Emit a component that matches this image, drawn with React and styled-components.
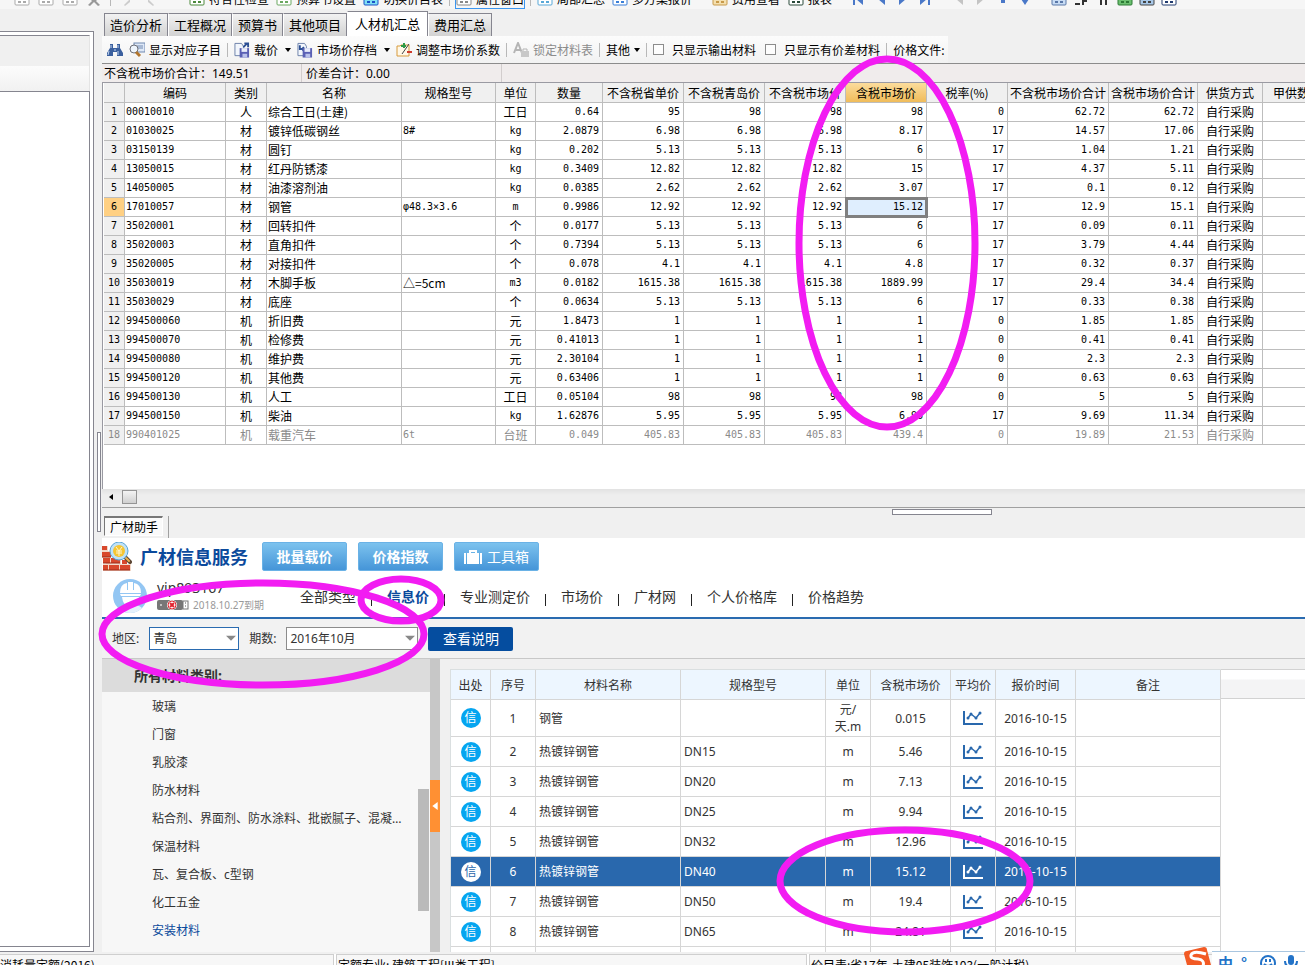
import React, { useState } from 'react';
import styled, { createGlobalStyle } from 'styled-components';

const CJK = '"Noto Sans CJK SC", sans-serif';
const WEB_FONT = '"Noto Sans", "Noto Sans CJK SC", sans-serif';
const MONO = '"DejaVu Sans Mono", "Noto Sans CJK SC", monospace';

const TABS = ['造价分析', '工程概况', '预算书', '其他项目', '人材机汇总', '费用汇总'];

const COLUMNS = [
  { title: '', width: 21, align: 'center' },
  { title: '编码', width: 101, align: 'left' },
  { title: '类别', width: 41, align: 'center' },
  { title: '名称', width: 135, align: 'left' },
  { title: '规格型号', width: 94, align: 'left' },
  { title: '单位', width: 40, align: 'center' },
  { title: '数量', width: 67, align: 'right' },
  { title: '不含税省单价', width: 81, align: 'right' },
  { title: '不含税青岛价', width: 81, align: 'right' },
  { title: '不含税市场价', width: 81, align: 'right' },
  { title: '含税市场价', width: 81, align: 'right' },
  { title: '税率(%)', width: 81, align: 'right' },
  { title: '不含税市场价合计', width: 101, align: 'right' },
  { title: '含税市场价合计', width: 89, align: 'right' },
  { title: '供货方式', width: 65, align: 'center' },
  { title: '甲供数量', width: 69, align: 'right' },
];

const ACTIVE_COLUMN = 10;
const ACTIVE_ROW = 6;

const ROWS = [
  ['00010010', '人', '综合工日(土建)', '', '工日', '0.64', '95', '98', '98', '98', '0', '62.72', '62.72'],
  ['01030025', '材', '镀锌低碳钢丝', '8#', 'kg', '2.0879', '6.98', '6.98', '6.98', '8.17', '17', '14.57', '17.06'],
  ['03150139', '材', '圆钉', '', 'kg', '0.202', '5.13', '5.13', '5.13', '6', '17', '1.04', '1.21'],
  ['13050015', '材', '红丹防锈漆', '', 'kg', '0.3409', '12.82', '12.82', '12.82', '15', '17', '4.37', '5.11'],
  ['14050005', '材', '油漆溶剂油', '', 'kg', '0.0385', '2.62', '2.62', '2.62', '3.07', '17', '0.1', '0.12'],
  ['17010057', '材', '钢管', 'φ48.3×3.6', 'm', '0.9986', '12.92', '12.92', '12.92', '15.12', '17', '12.9', '15.1'],
  ['35020001', '材', '回转扣件', '', '个', '0.0177', '5.13', '5.13', '5.13', '6', '17', '0.09', '0.11'],
  ['35020003', '材', '直角扣件', '', '个', '0.7394', '5.13', '5.13', '5.13', '6', '17', '3.79', '4.44'],
  ['35020005', '材', '对接扣件', '', '个', '0.078', '4.1', '4.1', '4.1', '4.8', '17', '0.32', '0.37'],
  ['35030019', '材', '木脚手板', '△=5cm', 'm3', '0.0182', '1615.38', '1615.38', '1615.38', '1889.99', '17', '29.4', '34.4'],
  ['35030029', '材', '底座', '', '个', '0.0634', '5.13', '5.13', '5.13', '6', '17', '0.33', '0.38'],
  ['994500060', '机', '折旧费', '', '元', '1.8473', '1', '1', '1', '1', '0', '1.85', '1.85'],
  ['994500070', '机', '检修费', '', '元', '0.41013', '1', '1', '1', '1', '0', '0.41', '0.41'],
  ['994500080', '机', '维护费', '', '元', '2.30104', '1', '1', '1', '1', '0', '2.3', '2.3'],
  ['994500120', '机', '其他费', '', '元', '0.63406', '1', '1', '1', '1', '0', '0.63', '0.63'],
  ['994500130', '机', '人工', '', '工日', '0.05104', '98', '98', '98', '98', '0', '5', '5'],
  ['994500150', '机', '柴油', '', 'kg', '1.62876', '5.95', '5.95', '5.95', '6.96', '17', '9.69', '11.34'],
  ['990401025', '机', '载重汽车', '6t', '台班', '0.049', '405.83', '405.83', '405.83', '439.4', '0', '19.89', '21.53'],
];

const NAV = ['全部类型', '信息价', '专业测定价', '市场价', '广材网', '个人价格库', '价格趋势'];

const CATEGORIES = [
  '玻璃',
  '门窗',
  '乳胶漆',
  '防水材料',
  '粘合剂、界面剂、防水涂料、批嵌腻子、混凝土外加剂',
  '保温材料',
  '瓦、复合板、c型钢',
  '化工五金',
  '安装材料',
];

const PRICE_COLUMNS = [
  ['出处', 40], ['序号', 45], ['材料名称', 145], ['规格型号', 145], ['单位', 45],
  ['含税市场价', 80], ['平均价', 45], ['报价时间', 80], ['备注', 145],
];

const PRICE_DATE = '2016-10-15';

const PRICES = [
  ['钢管', '', '元/天.m', '0.015', PRICE_DATE],
  ['热镀锌钢管', 'DN15', 'm', '5.46', PRICE_DATE],
  ['热镀锌钢管', 'DN20', 'm', '7.13', PRICE_DATE],
  ['热镀锌钢管', 'DN25', 'm', '9.94', PRICE_DATE],
  ['热镀锌钢管', 'DN32', 'm', '12.96', PRICE_DATE],
  ['热镀锌钢管', 'DN40', 'm', '15.12', PRICE_DATE],
  ['热镀锌钢管', 'DN50', 'm', '19.4', PRICE_DATE],
  ['热镀锌钢管', 'DN65', 'm', '24.81', PRICE_DATE],
  [],
];

const isMono = (text) => !/[\u4e00-\u9fff△]/.test(text);

/* ---------- icons ---------- */

const BinocularsIcon = () => (
  <svg width="16" height="16" viewBox="0 0 16 16">
    <path d="M3 2h3v4h4V2h3v4l3 5v3h-6v-4H6v4H0v-3l3-5z" fill="#3a5f9e" />
    <path d="M2 9l-1 4M11 9v4M4 3v3M11 3v3M7 8h2" stroke="#c4d6f0" strokeWidth="1" />
  </svg>
);

const SearchListIcon = () => (
  <svg width="16" height="16" viewBox="0 0 16 16">
    <rect x="5" y="1" width="11" height="9" fill="#dfe9f7" stroke="#7189b0" />
    <path d="M8 4h6M8 6h6" stroke="#7189b0" />
    <circle cx="5" cy="7" r="4" fill="#eef5fc" stroke="#6d7078" />
    <path d="M7 10l4 4" stroke="#b0742c" strokeWidth="3" />
  </svg>
);

const SaveDocIcon = ({ flip }) => (
  <svg width="16" height="16" viewBox="0 0 17 16">
    <path d="M1 1h7l2 3v10H1z" fill="#f2f6fc" stroke="#6a7ea8" />
    <path d={flip ? 'M3 3v4h5M6 5l2 2-2 2' : 'M10 5l4-4M11 1h4v4'} fill="none" stroke="#2c4f94" strokeWidth="2" />
    <rect x="6" y="6" width="10" height="10" fill="#5a60b4" />
    <rect x="8" y="6" width="6" height="4" fill="#e8ecfa" />
    <rect x="9" y="12" width="5" height="4" fill="#b9c1ea" />
  </svg>
);

const AdjustIcon = () => (
  <svg width="16" height="16" viewBox="0 0 16 16">
    <path d="M1 4h3l1-1h8v11H1z" fill="#fff8e8" stroke="#d79a3c" />
    <path d="M6 12l7-10" stroke="#444" />
    <path d="M5 4h5M8 1v5" stroke="#2d9a48" strokeWidth="2" />
    <path d="M11 10h5" stroke="#cf3a2b" strokeWidth="2" />
  </svg>
);

const LockTextIcon = () => (
  <svg width="16" height="16" viewBox="0 0 16 16">
    <path d="M1 11L5 1l4 10M3 8h5" fill="none" stroke="#b5b5b5" strokeWidth="2" />
    <rect x="8" y="9" width="8" height="6" fill="#c8c8c8" />
    <path d="M10 9V7h4v2" fill="none" stroke="#b5b5b5" />
  </svg>
);

const LogoIcon = () => (
  <svg width="30" height="30" viewBox="0 0 30 30">
    <path d="M0 4h6v5h3v7h10v6h10v7H1v-7h3v-6H0z" fill="#f3d8c8" />
    <g fill="#d8482c">
      <rect x="0" y="4" width="5" height="4" />
      <rect x="0" y="10" width="9" height="5" />
      <rect x="1" y="16" width="7" height="5" />
      <rect x="9" y="16" width="9" height="5" />
      <rect x="1" y="23" width="5" height="5" />
      <rect x="7" y="23" width="10" height="5" />
      <rect x="18" y="23" width="10" height="5" />
      <rect x="20" y="18" width="5" height="4" />
    </g>
    <path d="M0 15h9M1 21h17M1 28h27" stroke="#9b2a18" />
    <path d="M23 15l5 5" stroke="#5c4634" strokeWidth="4" strokeLinecap="round" />
    <path d="M24 16l3 3" stroke="#f0b04a" strokeWidth="2" strokeLinecap="round" />
    <circle cx="17" cy="9" r="9" fill="#bfe2f8" stroke="#5aa4d8" strokeWidth="1" />
    <circle cx="17" cy="9" r="6" fill="#f6c532" />
    <path d="M14 5l3 4 3-4M17 9v5M14 9h6M14 11h6" fill="none" stroke="#fff6d0" strokeWidth="1" />
  </svg>
);

const CaseIcon = () => (
  <svg width="18" height="14" viewBox="0 0 18 14">
    <path d="M6 3V1h6v2" fill="none" stroke="#fff" strokeWidth="2" />
    <path d="M0 3h2v11H0zM3 3h12v11H3zM16 3h2v11h-2z" fill="#fff" />
  </svg>
);

const AvatarIcon = () => (
  <svg width="34" height="34" viewBox="0 0 34 34">
    <circle cx="17" cy="17" r="17" fill="#93c6f3" />
    <path d="M7 14q0-9 7-10v7h1V3h5v8h1V4q7 1 7 10z" fill="#fff" />
    <path d="M7 15h21l-1 2H8z" fill="#fff" />
    <path d="M9 18h17q-1 8-6 9v2q-3 2-5 0v-2q-5-1-6-9z" fill="#fff" />
    <path d="M5 29q4-3 9-3 3 5 7 0 5 0 8 3-5 5-12 5T5 29z" fill="#e4f1fc" />
  </svg>
);

const UsbIcon = () => (
  <svg width="32" height="10" viewBox="0 0 32 10">
    <rect x="0" y="0" width="26" height="10" rx="2" fill="#777" />
    <rect x="26" y="1" width="5" height="8" fill="#fff" stroke="#777" />
    <path d="M28 3h1M28 6h1" stroke="#555" />
    <circle cx="4" cy="5" r="1" fill="#ddd" />
    <circle cx="15" cy="5" r="5" fill="#fff" />
    <circle cx="15" cy="5" r="4" fill="#fff" stroke="#e0242e" strokeWidth="1" />
    <path d="M13 3l4 4M17 3l-4 4" stroke="#e0242e" strokeWidth="2" />
  </svg>
);

const TrendIcon = () => (
  <svg width="20" height="16" viewBox="0 0 20 16">
    <path d="M1 1v13h19" fill="none" stroke="currentColor" strokeWidth="2" />
    <path d="M5 8l3-4 5 4 4-5" fill="none" stroke="currentColor" strokeWidth="1.5" />
    <g fill="currentColor">
      <circle cx="5" cy="8" r="1.5" />
      <circle cx="8" cy="4" r="1.5" />
      <circle cx="13" cy="8" r="1.5" />
      <circle cx="17" cy="3" r="1.5" />
    </g>
  </svg>
);

const TRIANGLES = {
  down: 'M0 1h6L3 5z',
  flat: 'M0 1h6L3 4z',
  left: 'M5 0v6L1 3z',
};

const Triangle = ({ size = 6, color = '#000', dir = 'down' }) => (
  <svg width={size} height={size} viewBox="0 0 6 6">
    <path d={TRIANGLES[dir]} fill={color} />
  </svg>
);

const SmallIcon = ({ color, accent = '#fff' }) => (
  <svg width="16" height="16" viewBox="0 0 16 16">
    <rect x="1" y="2" width="14" height="12" rx="1" fill={accent} stroke={color} strokeWidth="1" />
    <path d="M4 11h3M9 11h3M4 7h8" stroke={color} strokeWidth="2" />
  </svg>
);

const StepIcon = ({ d, color = '#4a78c8' }) => (
  <svg width="16" height="16" viewBox="0 0 16 16">
    <path d={d} fill={color} />
  </svg>
);

const SogouIcon = () => (
  <svg width="28" height="18" viewBox="0 0 28 18">
    <path d="M0 7q0-3 3-3L20 0q3 0 3 3l4 15H3z" fill="#f25a24" />
    <path d="M22 7q-13-4-15 1-1 4 7 4 7 1 5 7" fill="none" stroke="#fff" strokeWidth="3" />
  </svg>
);

const SmileIcon = () => (
  <svg width="16" height="16" viewBox="0 0 16 16">
    <circle cx="8" cy="8" r="7" fill="none" stroke="#2373c8" strokeWidth="2" />
    <path d="M6 4v3M10 4v3M4 9q4 4 8 0" fill="none" stroke="#2373c8" strokeWidth="2" />
  </svg>
);

const MicIcon = () => (
  <svg width="14" height="16" viewBox="0 0 14 16">
    <rect x="4" y="0" width="6" height="10" rx="3" fill="#2373c8" />
    <path d="M1 6q0 6 6 6t6-6M7 12v4" fill="none" stroke="#2373c8" strokeWidth="2" />
  </svg>
);

/* ---------- window frame ---------- */

const TopBar = () => (
  <TopToolbar>
    <TopGroup $faded>
      <SmallIcon color="#aaa" />
      <SmallIcon color="#aaa" />
      <SmallIcon color="#aaa" />
      <StepIcon color="#999" d="M3 4l5 5 5-5 1 2-4 4 4 4-2 1-4-4-4 4-2-1 4-4-4-4z" />
      <Separator />
      <StepIcon color="#ccc" d="M5 14l6-6v3l-5 4z" />
      <StepIcon color="#ccc" d="M11 14L5 8v3l5 4z" />
    </TopGroup>
    <TopGroup>
      <TopButton type="button"><SmallIcon color="#4c8a3c" />符合性检查</TopButton>
      <TopButton type="button"><SmallIcon color="#6aa860" />预算书设置</TopButton>
      <TopButton type="button"><SmallIcon color="#1c50c8" accent="#7fe0f4" />切换价目表</TopButton>
      <Separator />
      <TopButton type="button" $active><SmallIcon color="#888" />属性窗口</TopButton>
      <Separator />
      <TopButton type="button"><SmallIcon color="#58a8d8" />局部汇总</TopButton>
      <TopButton type="button"><SmallIcon color="#3a7fd8" />多方案报价</TopButton>
    </TopGroup>
    <TopGroup $spaced>
      <TopButton type="button"><SmallIcon color="#c89a4a" accent="#f4e0b0" />费用查看</TopButton>
      <TopButton type="button"><SmallIcon color="#2a4a3a" />报表</TopButton>
    </TopGroup>
    <TopGroup $spaced>
      <StepIcon d="M2 2h2v12H2zM12 2v12L5 8z" />
      <StepIcon d="M12 2v12L5 8z" />
      <StepIcon d="M4 2v12l7-6z" />
      <StepIcon d="M3 2v12l7-6zM11 2h2v12h-2z" />
    </TopGroup>
    <TopGroup $spaced>
      <StepIcon color="#c4c4c4" d="M12 2v12L5 8z" />
      <StepIcon color="#c4c4c4" d="M4 2v12l7-6z" />
      <StepIcon d="M6 2h4v10H6z" />
      <StepIcon d="M4 8h8l-4 6z" />
    </TopGroup>
    <TopGroup $spaced>
      <SmallIcon color="#5a78a8" accent="#c8dcf4" />
      <StepIcon color="#333" d="M2 12h5v2H2zM9 9h5v2H9zM9 4h2v10H9z" />
      <StepIcon color="#333" d="M4 4h3v10H5V8zM9 4h3v10h-2V8z" />
      <SmallIcon color="#2c7a34" accent="#6cc070" />
      <SmallIcon color="#444" accent="#a8c8e8" />
      <SmallIcon color="#223c70" />
    </TopGroup>
  </TopToolbar>
);

const SummaryToolbar = () => (
  <Toolbar>
    <ToolButton type="button" aria-label="查找"><BinocularsIcon /></ToolButton>
    <ToolButton type="button"><SearchListIcon />显示对应子目</ToolButton>
    <Separator />
    <ToolButton type="button">
      <SaveDocIcon />
      载价
      <Caret><Triangle /></Caret>
    </ToolButton>
    <ToolButton type="button">
      <SaveDocIcon flip />
      市场价存档
      <Caret><Triangle /></Caret>
    </ToolButton>
    <ToolButton type="button"><AdjustIcon />调整市场价系数</ToolButton>
    <Separator />
    <ToolButton type="button" disabled><LockTextIcon />锁定材料表</ToolButton>
    <Separator />
    <ToolButton type="button">其他<Triangle /></ToolButton>
    <Separator />
    <CheckLabel><input type="checkbox" />只显示输出材料</CheckLabel>
    <CheckLabel><input type="checkbox" />只显示有价差材料</CheckLabel>
    <Separator />
    <span>价格文件:</span>
  </Toolbar>
);

const MaterialGrid = () => (
  <GridWrap>
    <GridTable>
      <colgroup>
        {COLUMNS.map(({ title, width }) => <col key={title} style={{ width }} />)}
      </colgroup>
      <thead>
        <tr>
          {COLUMNS.map(({ title }, i) => (
            <GridHead key={title} $active={i === ACTIVE_COLUMN}>{title}</GridHead>
          ))}
        </tr>
      </thead>
      <tbody>
        {ROWS.map((row, r) => {
          const cells = [String(r + 1), ...row, '自行采购', ''];
          return (
            <GridRow key={row[0]} $muted={r === ROWS.length - 1}>
              {cells.map((text, c) => (
                <GridCell
                  key={COLUMNS[c].title}
                  $align={COLUMNS[c].align}
                  $mono={isMono(text)}
                  $index={c === 0}
                  $current={c === 0 && r + 1 === ACTIVE_ROW}
                  $selected={c === ACTIVE_COLUMN && r + 1 === ACTIVE_ROW}
                >
                  {text}
                </GridCell>
              ))}
            </GridRow>
          );
        })}
      </tbody>
    </GridTable>
  </GridWrap>
);

/* ---------- price service ---------- */

const ServiceHeader = () => {
  const [current, setCurrent] = useState('信息价');
  return (
    <ServiceHead>
      <BrandRow>
        <Brand><LogoIcon />广材信息服务</Brand>
        <BlueButton type="button" $bold>批量载价</BlueButton>
        <BlueButton type="button" $bold>价格指数</BlueButton>
        <BlueButton type="button"><CaseIcon />工具箱</BlueButton>
      </BrandRow>
      <UserRow>
        <User>
          <AvatarIcon />
          <UserInfo>
            <UserName>vip893167</UserName>
            <Expiry><UsbIcon />2018.10.27到期</Expiry>
          </UserInfo>
        </User>
        <Nav>
          {NAV.map((name) => (
            <NavItem key={name}>
              <NavLink
                href={`#${name}`}
                $active={name === current}
                onClick={() => setCurrent(name)}
              >
                {name}
              </NavLink>
            </NavItem>
          ))}
        </Nav>
      </UserRow>
    </ServiceHead>
  );
};

const Filters = () => (
  <FilterBar>
    <label htmlFor="region">地区:</label>
    <SelectBox $width={90} $focus>
      <select id="region" defaultValue="青岛"><option>青岛</option></select>
      <Triangle size={10} color="#888" dir="flat" />
    </SelectBox>
    <label htmlFor="period">期数:</label>
    <SelectBox $width={132}>
      <select id="period" defaultValue="2016年10月"><option>2016年10月</option></select>
      <Triangle size={10} color="#888" dir="flat" />
    </SelectBox>
    <DarkButton type="button">查看说明</DarkButton>
  </FilterBar>
);

const CategoryList = () => (
  <Sidebar>
    <SidebarTitle>所有材料类别:</SidebarTitle>
    <SidebarBody>
      <List>
        {CATEGORIES.map((name, i) => (
          <li key={name}>
            <Category href={`#${name}`} $active={i === CATEGORIES.length - 1}>{name}</Category>
          </li>
        ))}
      </List>
      <SidebarTrack><SidebarThumb /></SidebarTrack>
    </SidebarBody>
  </Sidebar>
);

const PriceTable = () => {
  const [selected, setSelected] = useState(5);
  return (
    <PriceArea>
      <Prices>
        <colgroup>
          {PRICE_COLUMNS.map(([title, width]) => <col key={title} style={{ width }} />)}
        </colgroup>
        <thead>
          <tr>{PRICE_COLUMNS.map(([title]) => <th key={title}>{title}</th>)}</tr>
        </thead>
        <tbody>
          {PRICES.map(([name, spec, unit, price, date], i) => (
            <PriceRow key={i} $selected={i === selected} onClick={() => setSelected(i)}>
              <td><Source $selected={i === selected}>{name && '信'}</Source></td>
              <td>{name && i + 1}</td>
              <PriceText>{name}</PriceText>
              <PriceText>{spec}</PriceText>
              <td>{unit}</td>
              <td>{price}</td>
              <td>{name && <Trend $selected={i === selected}><TrendIcon /></Trend>}</td>
              <td>{date}</td>
              <td />
            </PriceRow>
          ))}
        </tbody>
      </Prices>
      <PriceFiller><FillerHead /></PriceFiller>
    </PriceArea>
  );
};

const Marks = () => (
  <MarkLayer fill="none" stroke="#f21cf2" strokeWidth="7">
    <ellipse cx="887" cy="243" rx="88" ry="184" />
    <ellipse cx="263" cy="634" rx="161" ry="51" />
    <ellipse cx="401" cy="600" rx="40" ry="21" />
    <ellipse cx="905" cy="881" rx="125" ry="51" />
  </MarkLayer>
);

const App = () => (
  <Window>
    <GlobalStyle />
    <TopBar />
    <Workspace>
      <LeftPane>
        <LeftHead />
        <LeftBody />
      </LeftPane>
      <Splitter><SplitHandle /></Splitter>
      <Main>
        <Tabs role="tablist">
          {TABS.map((name) => (
            <Tab key={name} type="button" role="tab" $active={name === '人材机汇总'}>{name}</Tab>
          ))}
        </Tabs>
        <SummaryToolbar />
        <Totals>
          <Total>不含税市场价合计：149.51</Total>
          <Total>价差合计：0.00</Total>
        </Totals>
        <MaterialGrid />
        <HScroll>
          <Triangle dir="left" />
          <HThumb />
        </HScroll>
        <HSplitter><HHandle /></HSplitter>
        <HelperTabs>
          <HelperTab type="button">广材助手</HelperTab>
        </HelperTabs>
        <Service>
          <ServiceHeader />
          <Filters />
          <ServiceBody>
            <CategoryList />
            <SideSplit>
              <Collapse type="button" aria-label="收起">
                <Triangle size={8} color="#fff" dir="left" />
              </Collapse>
            </SideSplit>
            <PriceTable />
          </ServiceBody>
        </Service>
      </Main>
    </Workspace>
    <StatusBar>
      <Status $width={334}>消耗量定额(2016)</Status>
      <Status $width={471}>定额专业: 建筑工程[III类工程]</Status>
      <Status>价目表:省17年-土建05装饰103(一般计税)</Status>
    </StatusBar>
    <Marks />
    <ImeBar>
      <SogouIcon />
      <ImeTools>
        <span>中</span>
        <span>°,</span>
        <SmileIcon />
        <MicIcon />
      </ImeTools>
    </ImeBar>
  </Window>
);

/* ---------- styles ---------- */

const GlobalStyle = createGlobalStyle`
  * {
    box-sizing: border-box;
  }
  body {
    margin: 0;
    background: #f0f0f0;
    color: #000;
    font: 12px/18px ${CJK};
  }
  button, select, input {
    margin: 0;
    padding: 0;
    border: 0;
    background: none;
    color: inherit;
    font: inherit;
  }
  svg {
    display: block;
    flex: none;
  }
`;

const Window = styled.div`
  display: flex;
  flex-direction: column;
  height: 100vh;
  overflow: hidden;
`;

const TopToolbar = styled.div`
  display: flex;
  align-items: flex-end;
  height: 9px;
  overflow: hidden;
  white-space: nowrap;
  background: #f6f6f6;
`;

const TopGroup = styled.div`
  display: flex;
  align-items: center;
  gap: ${({ $faded, $spaced }) => ($faded ? 8 : $spaced ? 6 : 5)}px;
  height: 20px;
  padding-left: ${({ $spaced }) => ($spaced ? 18 : 14)}px;
  padding-right: ${({ $faded }) => ($faded ? 15 : 0)}px;
`;

const TopButton = styled.button`
  display: flex;
  align-items: center;
  gap: 4px;
  height: 20px;
  line-height: 16px;
  border: 1px solid ${({ $active }) => ($active ? '#3c96f0' : 'transparent')};
`;

const Separator = styled.i`
  width: 1px;
  height: 14px;
  background: #b8b8b8;
`;

const Workspace = styled.div`
  display: flex;
  flex: 1;
  min-height: 0;
`;

const LeftPane = styled.aside`
  display: flex;
  flex-direction: column;
  flex: 0 0 94px;
  margin: 22px 0 2px;
  padding: 3px 3px 4px 0;
  background: #fff;
  border: solid #85858f;
  border-width: 1px 1px 1px 0;
`;

const LeftHead = styled.div`
  height: 56px;
  border-top: 1px solid #85858f;
  border-right: 1px solid #e4e4e4;
  background: linear-gradient(#f0f0f0 30px, #fcfcfc 30px, #f1f1f1);
`;

const LeftBody = styled.div`
  flex: 1;
  border: solid #85858f;
  border-width: 1px 1px 1px 0;
`;

const Splitter = styled.div`
  display: flex;
  align-items: center;
  flex: 0 0 8px;
  padding-left: 3px;
`;

const SplitHandle = styled.div`
  width: 4px;
  height: 100px;
  background: #fff;
  border: 1px solid #85858f;
`;

const Main = styled.main`
  display: flex;
  flex-direction: column;
  flex: 1;
  min-width: 0;
  padding-top: 2px;
`;

const Tabs = styled.div`
  display: flex;
  align-items: flex-end;
  height: 25px;
  padding-left: 2px;
`;

const Tab = styled.button`
  height: ${({ $active }) => ($active ? 25 : 23)}px;
  padding: 0 ${({ $active }) => ($active ? 7 : 5)}px;
  font-size: 13px;
  background: ${({ $active }) => ($active ? '#fff' : 'linear-gradient(#f2f2f2, #d2d2d2)')};
  border: solid #85858f;
  border-width: 1px 1px 0;
  & + & {
    border-left-color: #fff;
  }
`;

const Toolbar = styled.div`
  display: flex;
  align-items: center;
  align-self: flex-start;
  gap: 6px;
  height: 27px;
  padding: 0 4px 0 5px;
  white-space: nowrap;
  background: linear-gradient(#fcfcfc, #f2f2f2);
`;

const ToolButton = styled.button`
  display: flex;
  align-items: center;
  gap: 4px;
  &:disabled {
    color: #8c8c8c;
  }
`;

const Caret = styled.span`
  padding-left: 3px;
`;

const CheckLabel = styled.label`
  display: flex;
  align-items: center;
  gap: 8px;
  & + & {
    padding-left: 3px;
  }
  input {
    appearance: none;
    width: 11px;
    height: 11px;
    border: 1px solid #8c8c8c;
    background: #fdfdfd;
  }
`;

const Totals = styled.div`
  display: flex;
  height: 19px;
  line-height: 19px;
  background: #f0ecec;
  border-top: 1px solid #8c8c8c;
`;

const Total = styled.div`
  width: 200px;
  padding: 0 2px;
  font-family: ${WEB_FONT};
  border-right: 1px solid #d2cdcd;
  & + & {
    padding-left: 4px;
  }
`;

const GridWrap = styled.div`
  overflow: hidden;
  padding: 0 0 44px 1px;
  background: #fff;
  border-top: 1px solid #9a9aa2;
  border-left: 1px solid #9a9aa2;
`;

const GridTable = styled.table`
  width: 100%;
  table-layout: fixed;
  border-collapse: separate;
  border-spacing: 0;
`;

const GridHead = styled.th`
  height: 20px;
  padding: 0;
  font-weight: 400;
  line-height: 19px;
  white-space: nowrap;
  background: ${({ $active }) => ($active ? 'linear-gradient(#fbdc9c, #f0bc5a)' : '#f0f0f0')};
  border: solid #bdbdbd;
  border-width: 0 1px 1px 0;
`;

const GridRow = styled.tr`
  color: ${({ $muted }) => ($muted ? '#8a8a8a' : '#000')};
`;

const GridCell = styled.td`
  height: 19px;
  padding: 0 ${({ $align }) => ($align === 'right' ? 3 : 1)}px 0 1px;
  line-height: 18px;
  font-family: ${({ $mono }) => ($mono ? MONO : CJK)};
  font-size: ${({ $mono }) => ($mono ? 10 : 12)}px;
  text-align: ${({ $align }) => $align};
  white-space: nowrap;
  background: ${({ $index, $current, $selected }) => {
    if ($selected) return '#dfeefe';
    if ($current) return '#ffd083';
    return $index ? '#f0f0f0' : '#fff';
  }};
  border: solid #bdbdbd;
  border-width: 0 1px 1px 0;
  outline: ${({ $selected }) => ($selected ? '3px solid #808080' : 'none')};
  outline-offset: -2px;
`;

const HScroll = styled.div`
  display: flex;
  align-items: center;
  gap: 8px;
  height: 19px;
  padding: 0 0 2px 6px;
  background: linear-gradient(#e2e2e2, #eee 6px);
  border-bottom: 1px solid #a0a0a0;
`;

const HThumb = styled.div`
  width: 15px;
  height: 14px;
  background: linear-gradient(#f4f4f4, #d0d0d0);
  border: 1px solid #959595;
`;

const HSplitter = styled.div`
  display: flex;
  justify-content: center;
  height: 8px;
  padding: 1px 0 0 477px;
`;

const HHandle = styled.div`
  width: 100px;
  height: 6px;
  background: #fff;
  border: 1px solid #85858f;
`;

const HelperTabs = styled.div`
  display: flex;
  align-self: flex-start;
  height: 22px;
  padding: 0 5px 2px 2px;
  border-right: 1px solid #a0a0a0;
`;

const HelperTab = styled.button`
  padding: 0 4px 0 5px;
  background: #fafafa;
  border: 1px solid #fff;
  border-top: 2px solid #777;
  border-left: 1px solid #777;
`;

const Service = styled.section`
  display: flex;
  flex-direction: column;
  flex: 1;
  min-height: 0;
  margin-bottom: 2px;
  color: #333;
  font-family: ${WEB_FONT};
`;

const ServiceHead = styled.header`
  background: #fff;
  border-bottom: 2px solid #2a6bb0;
`;

const BrandRow = styled.div`
  display: flex;
  gap: 11px;
  height: 36px;
  padding-top: 4px;
`;

const Brand = styled.div`
  display: flex;
  align-items: center;
  gap: 8px;
  width: 149px;
  height: 29px;
  color: #0b4a9c;
  font-size: 18px;
  font-weight: 700;
  white-space: nowrap;
`;

const BlueButton = styled.button`
  display: flex;
  align-items: center;
  justify-content: center;
  gap: 5px;
  width: 85px;
  height: 29px;
  color: #fff;
  font-size: 14px;
  font-weight: ${({ $bold }) => ($bold ? 700 : 400)};
  background: linear-gradient(#7cc2ee, #4595d8);
  border: 1px solid #6ab2e6;
  border-radius: 2px;
`;

const UserRow = styled.div`
  display: flex;
  align-items: center;
  height: 43px;
`;

const User = styled.div`
  display: flex;
  align-items: center;
  gap: 10px;
  flex: 0 0 198px;
  padding-left: 11px;
`;

const UserInfo = styled.div`
  display: flex;
  flex-direction: column;
`;

const UserName = styled.span`
  font-size: 14px;
`;

const Expiry = styled.span`
  display: flex;
  align-items: center;
  gap: 4px;
  color: #999;
  font-size: 10px;
  line-height: 16px;
  white-space: nowrap;
`;

const Nav = styled.nav`
  display: flex;
  line-height: 20px;
  padding-top: 2px;
`;

const NavItem = styled.span`
  display: flex;
  align-items: center;
  & + &::before {
    content: '';
    width: 1px;
    height: 12px;
    margin: 6px 15px 0;
    background: #222;
  }
`;

const NavLink = styled.a`
  color: ${({ $active }) => ($active ? '#0b4a9c' : '#333')};
  font-size: 14px;
  font-weight: ${({ $active }) => ($active ? 700 : 400)};
  text-decoration: none;
`;

const FilterBar = styled.div`
  display: flex;
  align-items: center;
  gap: 10px;
  height: 40px;
  padding-left: 10px;
  background: #f2f2f2;
  border-bottom: 1px solid #c8c8c8;
`;

const SelectBox = styled.span`
  display: flex;
  align-items: center;
  width: ${({ $width }) => $width}px;
  height: 23px;
  padding-right: 2px;
  background: #fff;
  border: 1px solid ${({ $focus }) => ($focus ? '#2a6bb0' : '#8c8c8c')};
  select {
    appearance: none;
    flex: 1;
    height: 21px;
    padding-left: 3px;
    outline: none;
  }
`;

const DarkButton = styled.button`
  width: 85px;
  height: 24px;
  color: #fff;
  font-size: 14px;
  background: #054d9f;
  border-radius: 2px;
`;

const ServiceBody = styled.div`
  display: flex;
  flex: 1;
  min-height: 0;
  overflow: hidden;
`;

const Sidebar = styled.aside`
  display: flex;
  flex-direction: column;
  flex: 0 0 328px;
  min-width: 0;
  background: #f7f7f7;
`;

const SidebarTitle = styled.h2`
  margin: 0;
  padding-left: 32px;
  font-size: 14px;
  line-height: 33px;
  background: #dcdcdc;
`;

const SidebarBody = styled.div`
  display: flex;
  flex: 1;
`;

const List = styled.ul`
  flex: 1;
  min-width: 0;
  margin: 0;
  padding: 1px 12px 0 50px;
  list-style: none;
`;

const Category = styled.a`
  display: block;
  overflow: hidden;
  color: ${({ $active }) => ($active ? '#0b4a9c' : '#333')};
  line-height: 28px;
  text-decoration: none;
  text-overflow: ellipsis;
  white-space: nowrap;
`;

const SidebarTrack = styled.div`
  padding: 97px 1px 0 0;
`;

const SidebarThumb = styled.div`
  width: 11px;
  height: 122px;
  background: #bababa;
`;

const SideSplit = styled.div`
  display: flex;
  align-items: center;
  flex: 0 0 10px;
  background: #c7c7c7;
`;

const Collapse = styled.button`
  width: 10px;
  height: 52px;
  padding-left: 1px;
  background: #ff9033;
`;

const PriceArea = styled.div`
  display: flex;
  flex: 1;
  min-width: 0;
  padding: 10px 0 0 10px;
`;

const Prices = styled.table`
  flex: none;
  width: 771px;
  height: max-content;
  table-layout: fixed;
  border-collapse: separate;
  border-spacing: 0;
  border: solid #dadfe0;
  border-width: 1px 0 0 1px;
  th, td {
    padding: 0;
    text-align: center;
    border: solid #d6d6d6;
    border-width: 0 1px 1px 0;
  }
  th {
    height: 30px;
    padding-top: 2px;
    font-weight: 400;
    background: #edf6ff;
  }
  td {
    height: 30px;
    padding: 0 4px;
    line-height: 17px;
  }
  td:nth-child(1), td:nth-child(8) {
    padding: 0;
  }
  tbody tr:first-child td {
    height: 37px;
  }
`;

const PriceRow = styled.tr`
  color: ${({ $selected }) => ($selected ? '#fff' : '#333')};
  background: ${({ $selected }) => ($selected ? '#2968ad' : '#fff')};
`;

const PriceText = styled.td`
  && {
    padding-left: 3px;
    text-align: left;
  }
`;

const Source = styled.span`
  display: block;
  width: 20px;
  height: 20px;
  margin: 0 auto;
  line-height: 20px;
  color: ${({ $selected }) => ($selected ? '#2968ad' : '#fff')};
  background: ${({ $selected }) => ($selected ? '#fff' : '#05a5f0')};
  border-radius: 50%;
`;

const Trend = styled.span`
  display: flex;
  justify-content: center;
  color: ${({ $selected }) => ($selected ? '#fff' : '#2968ad')};
`;

const PriceFiller = styled.div`
  flex: 1;
  background: #fff;
`;

const FillerHead = styled.div`
  height: 30px;
  background: linear-gradient(#fff 9px, #f4f4f5 10px);
  border: solid #d2d2d2;
  border-width: 1px 0;
`;

const StatusBar = styled.footer`
  display: flex;
  gap: 2px;
  height: 11px;
  overflow: hidden;
  background: #fff;
`;

const Status = styled.div`
  flex: ${({ $width }) => ($width ? `0 0 ${$width}px` : 1)};
  height: 24px;
  padding-left: 1px;
  line-height: 20px;
  white-space: nowrap;
  background: #f7f7f7;
  border: 1px solid #cfcfcf;
  &:first-child {
    padding-left: 0;
    border-left: 0;
  }
`;

const MarkLayer = styled.svg`
  position: fixed;
  inset: 0;
  width: 100%;
  height: 100%;
  pointer-events: none;
`;

const ImeBar = styled.div`
  position: fixed;
  right: 0;
  bottom: 0;
  display: flex;
  align-items: flex-end;
  height: 17px;
`;

const ImeTools = styled.div`
  display: flex;
  align-items: flex-start;
  gap: 8px;
  height: 14px;
  padding: 3px 7px 0 6px;
  overflow: hidden;
  color: #2373c8;
  font-size: 15px;
  font-weight: 700;
  line-height: 16px;
  background: #fff;
  border-top: 1px solid #a9c6e0;
`;

export default App;
